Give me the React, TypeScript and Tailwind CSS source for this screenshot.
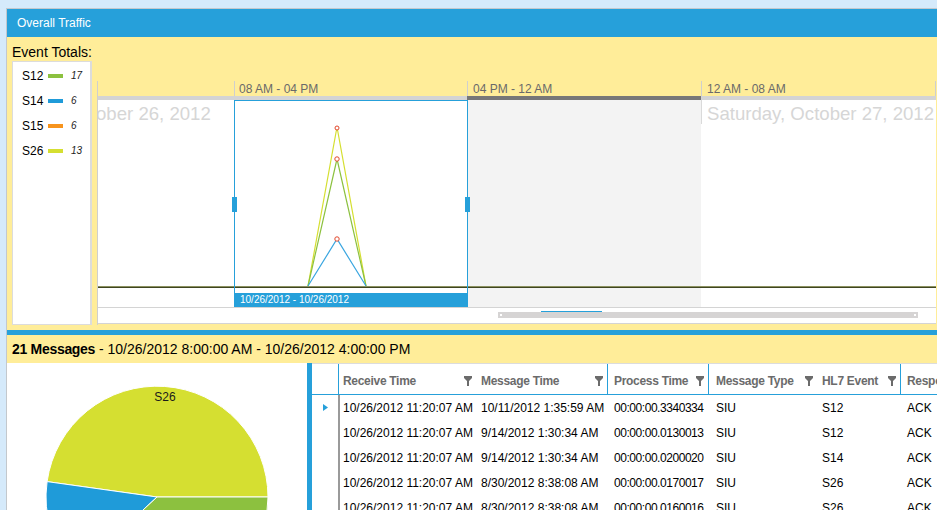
import React from 'react'

const legend = [
  { name: 'S12', color: 'bg-[#8cc13f]', count: '17' },
  { name: 'S14', color: 'bg-[#1f9bd9]', count: '6' },
  { name: 'S15', color: 'bg-[#f7941d]', count: '6' },
  { name: 'S26', color: 'bg-[#d5df31]', count: '13' },
]

const columns = [
  { title: 'Receive Time', cls: 'w-[136px] pl-[3px]', head: 'w-[136px] pl-[3px]' },
  { title: 'Message Time', cls: 'w-[131px] pl-[5px]', head: 'w-[131px] pl-[5px]' },
  { title: 'Process Time', cls: 'w-[101px] pl-[6px] border-l border-transparent tracking-[-0.45px]', head: 'w-[101px] pl-[6px] border-l border-[#26a0da]' },
  { title: 'Message Type', cls: 'w-[109px] pl-[7px] border-l border-transparent', head: 'w-[109px] pl-[7px] border-l border-[#26a0da]' },
  { title: 'HL7 Event', cls: 'w-[83px] pl-[5px]', head: 'w-[83px] pl-[5px]' },
  { title: 'Response', cls: 'flex-1 pl-[6px] border-l border-transparent', head: 'flex-1 pl-[6px] border-l border-[#26a0da]' },
]

const rows = [
  ['10/26/2012 11:20:07 AM', '10/11/2012 1:35:59 AM', '00:00:00.3340334', 'SIU', 'S12', 'ACK'],
  ['10/26/2012 11:20:07 AM', '9/14/2012 1:30:34 AM', '00:00:00.0130013', 'SIU', 'S12', 'ACK'],
  ['10/26/2012 11:20:07 AM', '9/14/2012 1:30:34 AM', '00:00:00.0200020', 'SIU', 'S14', 'ACK'],
  ['10/26/2012 11:20:07 AM', '8/30/2012 8:38:08 AM', '00:00:00.0170017', 'SIU', 'S26', 'ACK'],
  ['10/26/2012 11:20:07 AM', '8/30/2012 8:38:08 AM', '00:00:00.0160016', 'SIU', 'S26', 'ACK'],
]

function FilterIcon() {
  return (
    <svg width="8" height="10" viewBox="0 0 8 10" className="shrink-0">
      <path d="M0 0H8V2L5 5V10H3V5L0 2Z" fill="#6b6b6b" />
    </svg>
  )
}

function TrafficChart() {
  return (
    <svg width="838" height="207" viewBox="0 0 838 207" className="absolute inset-0">
      <rect x="0" y="186" width="838" height="1" fill="#8b9160" />
      <rect x="0" y="187" width="838" height="1" fill="#3f4520" />
      <polyline points="210,186 239,27 268,186" fill="none" stroke="#d5df31" strokeWidth="1.2" />
      <polyline points="210,186 239,59 268,186" fill="none" stroke="#8cc13f" strokeWidth="1.2" />
      <polyline points="210,186 239,139 268,186" fill="none" stroke="#3aa6e0" strokeWidth="1.2" />
      <circle cx="239" cy="28" r="2" fill="#fff" stroke="#e2472b" strokeWidth="1" />
      <circle cx="239" cy="59" r="2.2" fill="#fff" stroke="#e2472b" strokeWidth="1" />
      <circle cx="239" cy="139" r="2.2" fill="#fff" stroke="#e2472b" strokeWidth="1" />
    </svg>
  )
}

function PieChart() {
  return (
    <svg width="300" height="147" viewBox="0 0 300 147">
      <path d="M150 134 L261 134 A111 111 0 0 0 40.1 118.6 Z" fill="#d5df31" stroke="#fff" strokeWidth="1" />
      <path d="M150 134 L40.1 118.6 A111 111 0 0 0 68.8 209.7 Z" fill="#1f9bd9" stroke="#fff" strokeWidth="1" />
      <path d="M150 134 L68.8 209.7 A111 111 0 0 0 261 134 Z" fill="#8cc13f" stroke="#fff" strokeWidth="1" />
      <text x="158" y="38" textAnchor="middle" fontSize="12" fill="#1a1a1a" fontFamily="Liberation Sans, Arial, sans-serif">S26</text>
    </svg>
  )
}

export default function App() {
  return (
    <div className="w-[937px] h-[510px] overflow-hidden bg-[#d5eafb] pt-[8px] pl-[6px] font-['Liberation_Sans',Arial,sans-serif]">
      <div className="h-full border-t border-l border-[#c3c8cd] flex flex-col">
        {/* header */}
        <div className="h-[28px] shrink-0 bg-[#26a0da] text-white text-[12px] pl-[10px] flex items-center">
          Overall Traffic
        </div>

        {/* timeline panel */}
        <div className="h-[293px] shrink-0 bg-[#ffed99] pl-[5px]">
          <div className="h-[24px] pt-[6px] text-[14px] leading-[18px] text-black">Event Totals:</div>
          <div className="flex gap-[5px]">
            <div className="w-[80px] h-[264px] bg-white border border-[#dcdcdc] border-r-2 pt-[1px]">
              {legend.map(l => (
                <div key={l.name} className="h-[25px] flex items-center pl-[9px] text-[12px]">
                  <span className="w-[26px] text-black">{l.name}</span>
                  <span className={`w-[15px] h-[4px] ${l.color}`} />
                  <span className="ml-[8px] text-[10px] italic text-[#222]">{l.count}</span>
                </div>
              ))}
            </div>

            <div className="mt-[20px] w-[839px] h-[244px] border-l border-[#cfcfcf] flex flex-col">
              {/* time labels */}
              <div className="h-[15px] flex text-[12px] leading-[16px] text-[#6a6a6a]">
                <div className="w-[136px]" />
                <div className="w-[233px] border-l border-[#cfcfcf] pl-[4px]">08 AM - 04 PM</div>
                <div className="w-[234px] border-l border-[#cfcfcf] pl-[5px]">04 PM - 12 AM</div>
                <div className="w-[234px] border-l border-[#cfcfcf] pl-[5px]">12 AM - 08 AM</div>
                <div className="w-px bg-[#cfcfcf]" />
              </div>
              <div className="h-[4px] flex bg-[#d4d4d4]">
                <div className="w-[369px]" />
                <div className="w-[234px] bg-[#777777]" />
              </div>

              {/* chart content */}
              <div className="relative h-[207px] flex overflow-hidden">
                <div className="w-[136px] bg-white pt-[2px]">
                  <div className="text-[18.6px] leading-[24px] text-[#d6d6d6] whitespace-nowrap -ml-[2px]">ober 26, 2012</div>
                </div>
                <div className="w-[233px] bg-white" />
                <div className="w-[234px] bg-[#f3f3f3]" />
                <div className="w-[235px] bg-white flex items-start">
                  <div className="w-px h-[24px] bg-[#dadada]" />
                  <div className="pl-[5px] pt-[2px] text-[18.6px] leading-[24px] text-[#d6d6d6] whitespace-nowrap">Saturday, October 27, 2012</div>
                </div>

                <TrafficChart />

                {/* selection */}
                <div className="absolute left-[136px] top-0 bottom-0 w-[234px] border-x border-t border-[#26a0da] flex flex-col justify-end">
                  <div className="absolute -left-[3px] top-[96px] w-[5px] h-[15px] bg-[#26a0da]" />
                  <div className="absolute -right-[3px] top-[96px] w-[5px] h-[15px] bg-[#26a0da]" />
                  <div className="h-[14px] -mx-px bg-[#26a0da] text-white text-[10px] leading-[14px] pl-[6px]">10/26/2012 - 10/26/2012</div>
                </div>
              </div>

              {/* scroll */}
              <div className="h-[17px] border-y border-[#d4d4d4] bg-white pl-[400px] pt-[3px]">
                <div className="w-[420px]">
                  <div className="ml-[43px] w-[61px] h-px bg-[#26a0da]" />
                  <div className="h-[6px] bg-[#d6d4d4] flex items-center justify-between px-[2px]">
                    <div className="w-[2px] h-[2px] bg-white" />
                    <div className="w-[2px] h-[2px] bg-white" />
                  </div>
                </div>
              </div>
            </div>
          </div>
        </div>

        <div className="h-[5px] shrink-0 bg-[#26a0da]" />

        {/* messages header */}
        <div className="h-[28px] shrink-0 bg-[#ffed99] pl-[5px] flex items-center text-[14px] text-black">
          <span className="font-semibold tracking-[-0.3px]">21 Messages</span>
          <span>&nbsp;- 10/26/2012 8:00:00 AM - 10/26/2012 4:00:00 PM</span>
        </div>

        {/* lower content */}
        <div className="flex-1 flex min-h-0">
          <div className="w-[300px] bg-white overflow-hidden">
            <PieChart />
          </div>
          <div className="w-[5px] bg-[#26a0da]" />
          <div className="flex-1 bg-white border-t border-[#dcdcdc] overflow-hidden">
            <div className="h-[31px] flex border-b border-[#26a0da] text-[12px] font-bold text-[#6b6b6b] tracking-[-0.3px]">
              <div className="w-[26px]" />
              <div className="w-[2px] border-l border-[#26a0da]" />
              {columns.map(c => (
                <div key={c.title} className={`${c.head} flex items-center justify-between pr-[4px] pt-[3px] overflow-hidden whitespace-nowrap`}>
                  <span>{c.title}</span>
                  {c.title !== 'Response' && <FilterIcon />}
                </div>
              ))}
            </div>
            {rows.map((r, i) => (
              <div key={i} className="h-[25px] flex text-[12px] text-black">
                <div className="w-[26px] flex items-center pl-[11px]">
                  {i === 0 && (
                    <svg width="5" height="7" viewBox="0 0 5 7">
                      <path d="M0 0L5 3.5L0 7Z" fill="#26a0da" />
                    </svg>
                  )}
                </div>
                <div className="w-[2px] bg-[#9a9a9a]" />
                {columns.map((c, j) => (
                  <div key={j} className={`${c.cls} flex items-center whitespace-nowrap overflow-hidden`}>
                    {r[j]}
                  </div>
                ))}
              </div>
            ))}
          </div>
        </div>
      </div>
    </div>
  )
}
